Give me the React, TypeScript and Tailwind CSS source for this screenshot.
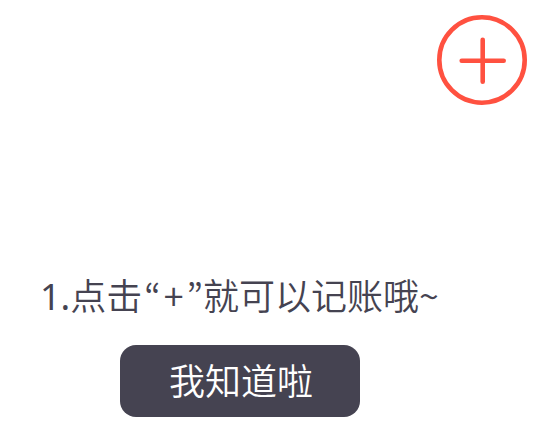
export default function App() {
  return (
    <main className="flex min-h-screen flex-col bg-white font-['Noto_Sans_CJK_SC',sans-serif] font-[350] text-[#454351]">
      <header className="flex justify-end px-[15px] pt-[15px]">
        <button type="button" aria-label="记账" className="size-[90px] text-[#ff5140]">
          <svg viewBox="0 0 90 90" className="size-full" fill="none" stroke="currentColor" strokeWidth="4.6" strokeLinecap="round" aria-hidden="true">
            <circle cx="45" cy="45" r="42.7" />
            <path d="M24.700 45.700H66.700M45.700 24.700V66.700" />
          </svg>
        </button>
      </header>
      <section className="flex flex-col items-start pt-[165px]">
        <p className="pl-10 text-4xl leading-[48px] whitespace-nowrap">
          <span className="font-['Noto_Sans',sans-serif] font-normal">1.</span>
          点击
          <span className="pl-[2px] font-['Noto_Sans_CJK_KR',sans-serif]">
            “<span className="px-[3px]">+</span>”
          </span>
          就可以记账哦~
        </p>
        <button type="button" className="mt-6 ml-[120px] h-[72px] w-60 rounded-2xl bg-[#454351] pb-1 pl-[2px] text-4xl text-white">
          我知道啦
        </button>
      </section>
    </main>
  );
}
